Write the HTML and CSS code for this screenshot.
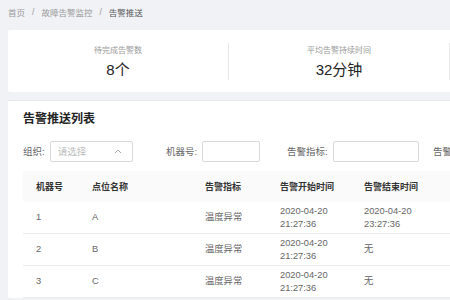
FILE: index.html
```html
<!DOCTYPE html>
<html lang="zh-CN">
<head>
  <meta charset="UTF-8">
  <meta name="viewport" content="width=device-width, initial-scale=1.0">
  <title>告警推送</title>
  <link rel="stylesheet" href="styles.css">
</head>
<body>

  <!-- Breadcrumb -->
  <div class="breadcrumb">
    <span>首页</span>
    <span class="sep">/</span>
    <span>故障告警监控</span>
    <span class="sep">/</span>
    <span class="current">告警推送</span>
  </div>

  <!-- Summary stats -->
  <div class="card stats">
    <div class="stat">
      <div class="stat-label">待完成告警数</div>
      <div class="stat-value">8个</div>
    </div>
    <div class="stat">
      <div class="stat-label">平均告警持续时间</div>
      <div class="stat-value">32分钟</div>
    </div>
  </div>

  <!-- Alarm list -->
  <div class="card list">
    <h2 class="list-title">告警推送列表</h2>

    <div class="filters">
      <div class="filter">
        <label>组织:</label>
        <div class="select">
          <span class="placeholder">请选择</span>
          <svg class="caret" width="8" height="5" viewBox="0 0 8 5">
            <path d="M1 4 L4 1 L7 4" fill="none" stroke="#aaa" stroke-width="1"/>
          </svg>
        </div>
      </div>
      <div class="filter">
        <label>机器号:</label>
        <input class="input input-sm" type="text">
      </div>
      <div class="filter">
        <label>告警指标:</label>
        <input class="input input-md" type="text">
      </div>
      <div class="filter">
        <label>告警</label>
      </div>
    </div>

    <table class="table">
      <colgroup>
        <col style="width: 56px">
        <col style="width: 113px">
        <col style="width: 75px">
        <col style="width: 84px">
        <col style="width: 100px">
        <col style="width: 100px">
      </colgroup>
      <thead>
        <tr>
          <th>机器号</th>
          <th>点位名称</th>
          <th>告警指标</th>
          <th>告警开始时间</th>
          <th>告警结束时间</th>
          <th></th>
        </tr>
      </thead>
      <tbody>
        <tr>
          <td>1</td>
          <td>A</td>
          <td>温度异常</td>
          <td>2020-04-20<br>21:27:36</td>
          <td>2020-04-20<br>23:27:36</td>
          <td></td>
        </tr>
        <tr>
          <td>2</td>
          <td>B</td>
          <td>温度异常</td>
          <td>2020-04-20<br>21:27:36</td>
          <td>无</td>
          <td></td>
        </tr>
        <tr>
          <td>3</td>
          <td>C</td>
          <td>温度异常</td>
          <td>2020-04-20<br>21:27:36</td>
          <td>无</td>
          <td></td>
        </tr>
      </tbody>
    </table>
  </div>

</body>
</html>
```

FILE: styles.css
```css
/* Page */
body {
  margin: 0;
  padding: 0 0 0 8px;
  background-color: #f0f2f5;
  font-family: 'Liberation Sans', 'Noto Sans CJK SC', sans-serif;
  color: #333;
  overflow: hidden;
  width: 1000px;
}

/* Breadcrumb */
.breadcrumb {
  height: 30px;
  display: flex;
  align-items: center;
  padding-bottom: 7px;
  box-sizing: border-box;
  font-size: 8.5px;
  color: #999;
}

.breadcrumb .sep {
  margin: 0 7px;
}

.breadcrumb .current {
  color: #555;
}

/* Cards */
.card {
  background-color: #fff;
  border-radius: 2px;
}

/* Stats */
.stats {
  display: flex;
  padding: 13px 0 12px;
  margin-bottom: 8px;
}

.stat {
  width: 220px;
  border-right: 1px solid #e8e8e8;
  text-align: center;
}

.stat-label {
  font-size: 8px;
  line-height: 16px;
  color: #999;
}

.stat-value {
  font-size: 15px;
  line-height: 21px;
  color: #222;
}

/* List */
.list {
  padding: 10px 0 0 15px;
  border-top: 1px solid #e6e8ee;
}

.list-title {
  margin: 0;
  font-size: 12px;
  line-height: 16px;
  font-weight: bold;
  color: #222;
}

/* Filters */
.filters {
  display: grid;
  grid-template-columns: 143px 121px 146px 150px;
  align-items: center;
  margin-top: 13px;
  height: 22px;
}

.filter {
  display: flex;
  align-items: center;
  font-size: 9.5px;
  color: #666;
}

.filter label {
  margin-right: 5px;
}

.select,
.input {
  height: 21px;
  box-sizing: border-box;
  border: 1px solid #d9d9d9;
  border-radius: 2px;
  background: #fff;
}

.select {
  width: 83px;
  display: flex;
  align-items: center;
  justify-content: space-between;
  padding: 0 10px 0 7px;
}

.placeholder {
  color: #bbb;
  font-size: 9.5px;
}

.input {
  padding: 0;
  outline: none;
}

.input-sm {
  width: 58px;
}

.input-md {
  width: 86px;
}

/* Table */
.table {
  margin-top: 9px;
  table-layout: fixed;
  border-collapse: collapse;
  width: 528px;
}

.table th {
  background-color: #fafafa;
  height: 31px;
  padding: 0 0 0 13px;
  text-align: left;
  font-size: 9px;
  font-weight: 600;
  color: #333;
}

.table td {
  height: 31px;
  padding: 0 0 0 13px;
  border-bottom: 1px solid #ebebeb;
  font-size: 9.3px;
  line-height: 13px;
  color: #666;
}
```
